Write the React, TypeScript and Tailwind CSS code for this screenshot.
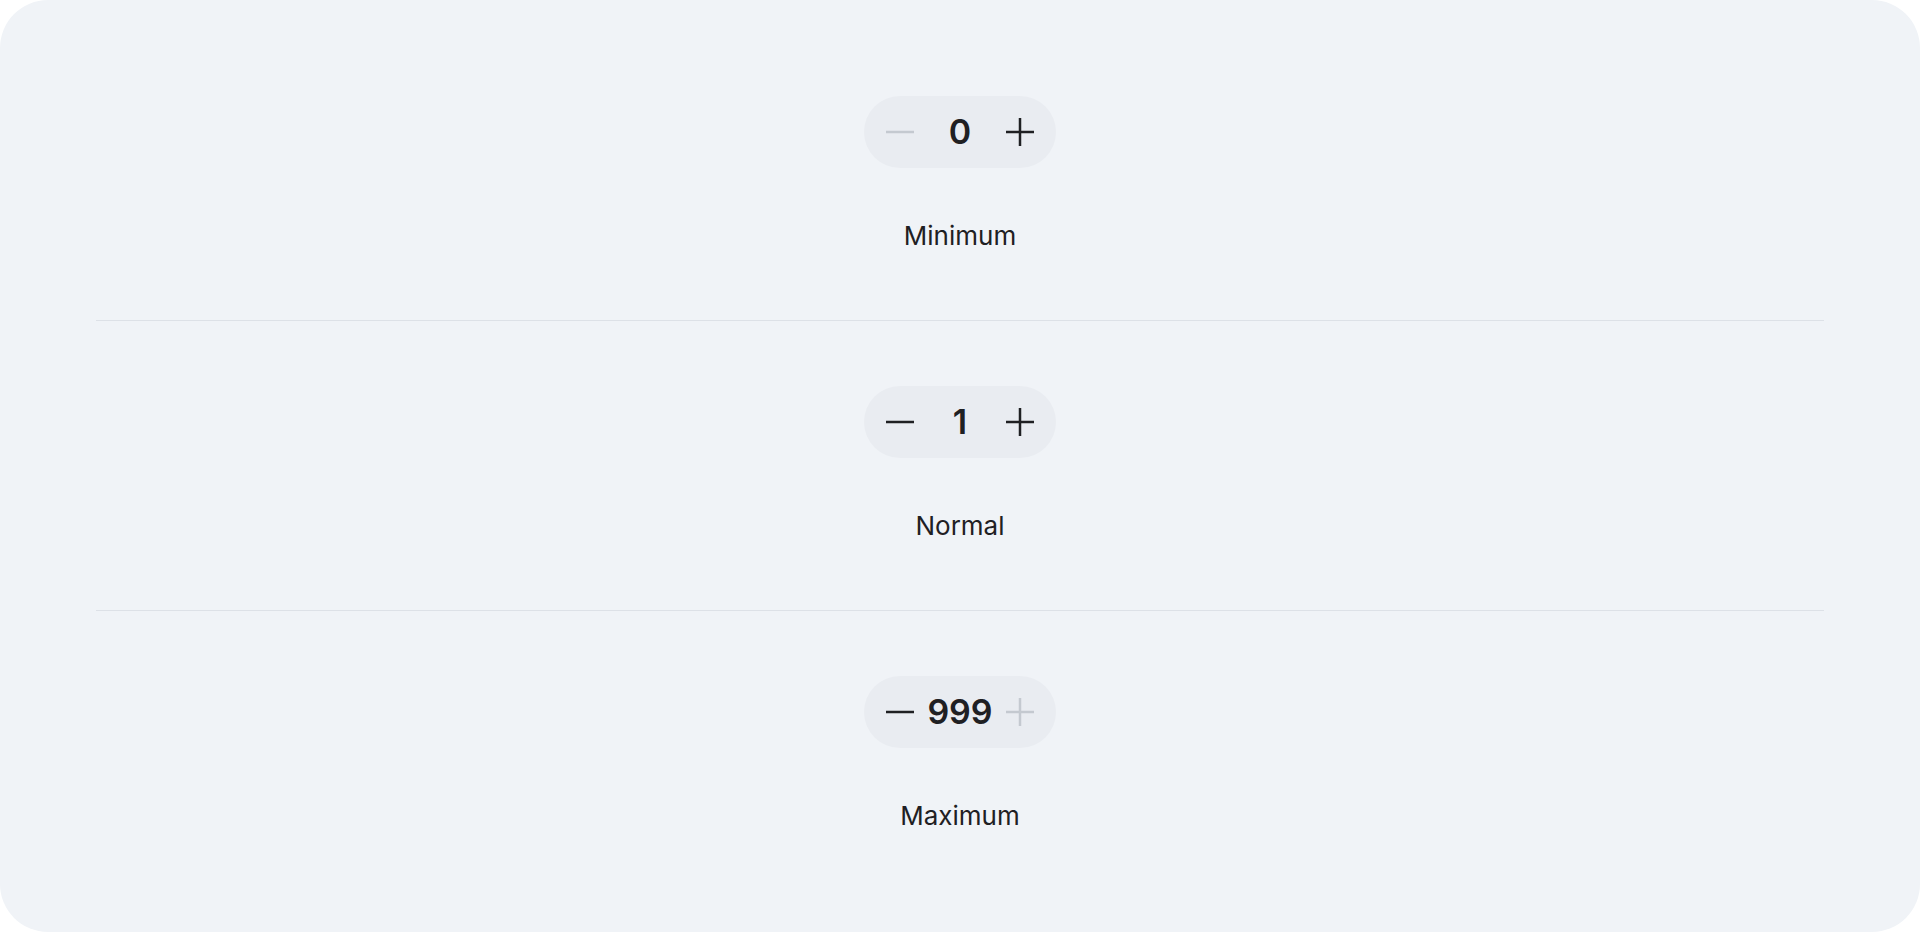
const MinusIcon = ({ disabled }: { disabled?: boolean }) => (
  <svg width="28" height="28" viewBox="0 0 28 28" fill="none">
    <line x1="0" y1="14" x2="28" y2="14" stroke={disabled ? '#c4c9d0' : '#1f2023'} strokeWidth="2.5" />
  </svg>
);

const PlusIcon = ({ disabled }: { disabled?: boolean }) => (
  <svg width="28" height="28" viewBox="0 0 28 28" fill="none">
    <line x1="0" y1="14" x2="28" y2="14" stroke={disabled ? '#c4c9d0' : '#1f2023'} strokeWidth="2.5" />
    <line x1="14" y1="0" x2="14" y2="28" stroke={disabled ? '#c4c9d0' : '#1f2023'} strokeWidth="2.5" />
  </svg>
);

const Stepper = ({ value, label, min, max }: { value: number; label: string; min: number; max: number }) => (
  <div className="flex flex-col items-center">
    <div className="flex h-[72px] w-[192px] items-center rounded-full bg-[#e9ecf1] px-2">
      <button className="flex h-[56px] w-[56px] items-center justify-center" disabled={value <= min}>
        <MinusIcon disabled={value <= min} />
      </button>
      <div className="flex w-16 justify-center overflow-visible whitespace-nowrap text-[34px] font-semibold leading-none text-[#1f2023]">
        {value}
      </div>
      <button className="flex h-[56px] w-[56px] items-center justify-center" disabled={value >= max}>
        <PlusIcon disabled={value >= max} />
      </button>
    </div>
    <div className="mt-[52px] text-[26px] leading-[32px] text-[#1f2023]">{label}</div>
  </div>
);

export default function App() {
  const rows = [
    { value: 0, label: 'Minimum' },
    { value: 1, label: 'Normal' },
    { value: 999, label: 'Maximum' },
  ];

  return (
    <div className="min-h-screen bg-white" style={{ fontFamily: 'Inter, "Noto Sans", sans-serif' }}>
      <div className="flex h-[932px] flex-col rounded-[48px] bg-[#f0f3f7] px-24 py-[31px]">
        {rows.map((r, i) => (
          <div key={r.label} className={i < rows.length - 1 ? 'border-b border-[#dde1e7]' : ''}>
            <div className="pt-[65px] pb-[68px]">
              <Stepper value={r.value} label={r.label} min={0} max={999} />
            </div>
          </div>
        ))}
      </div>
    </div>
  );
}
